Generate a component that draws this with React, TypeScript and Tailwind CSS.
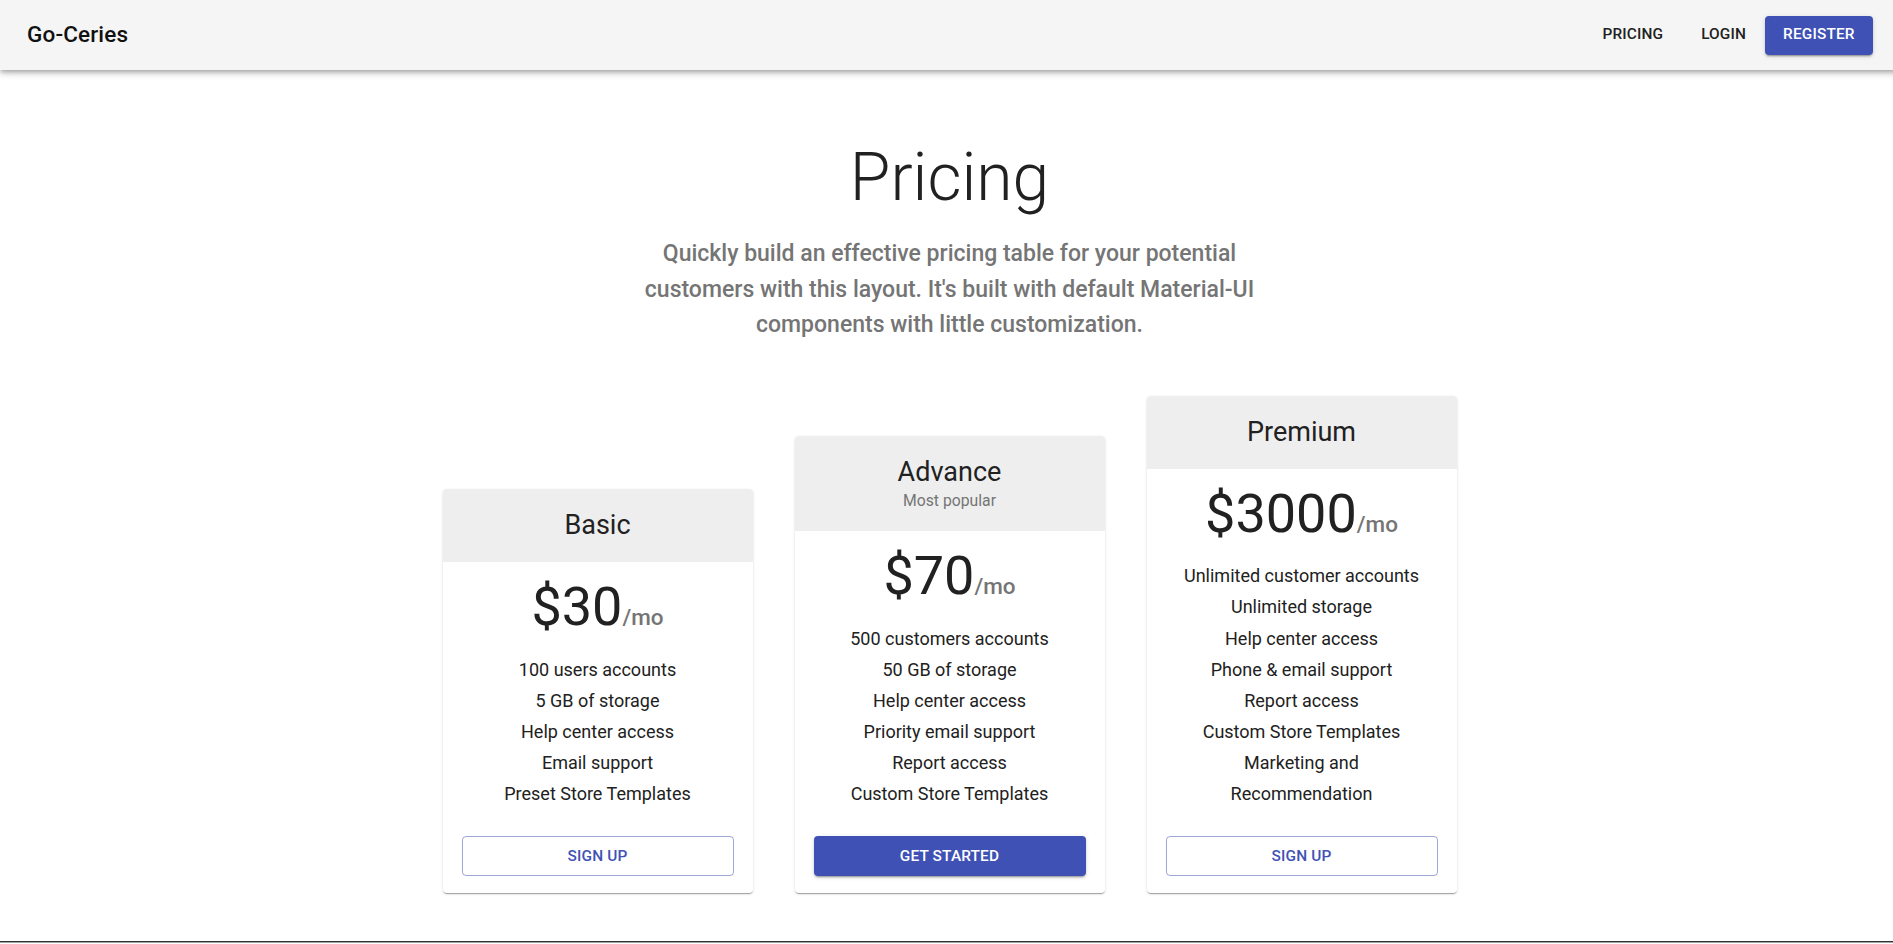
import React from 'react';

interface Tier {
  title: string;
  subheader?: string;
  price: string;
  features: string[];
  buttonText: string;
  contained?: boolean;
}

const tiers: Tier[] = [
  {
    title: 'Basic',
    price: '30',
    features: ['100 users accounts', '5 GB of storage', 'Help center access', 'Email support', 'Preset Store Templates'],
    buttonText: 'Sign up',
  },
  {
    title: 'Advance',
    subheader: 'Most popular',
    price: '70',
    features: [
      '500 customers accounts',
      '50 GB of storage',
      'Help center access',
      'Priority email support',
      'Report access',
      'Custom Store Templates',
    ],
    buttonText: 'Get started',
    contained: true,
  },
  {
    title: 'Premium',
    price: '3000',
    features: [
      'Unlimited customer accounts',
      'Unlimited storage',
      'Help center access',
      'Phone & email support',
      'Report access',
      'Custom Store Templates',
      'Marketing and',
      'Recommendation',
    ],
    buttonText: 'Sign up',
  },
];

const PricingCard = ({ tier }: { tier: Tier }) => {
  return (
    <div className="w-[310px] bg-white rounded-[4px] overflow-hidden shadow-[0px_2px_1px_-1px_rgba(0,0,0,0.2),0px_1px_1px_0px_rgba(0,0,0,0.14),0px_1px_3px_0px_rgba(0,0,0,0.12)]">
      <div className="bg-[#eeeeee] py-[19px] text-center">
        <div className="text-[27px] leading-[35px] text-[#212121]">{tier.title}</div>
        {tier.subheader && (
          <div className="text-[15.75px] leading-[22px] text-[#757575]">{tier.subheader}</div>
        )}
      </div>
      <div className="pt-[14px] px-[18px]">
        <div className="flex justify-center items-baseline mb-[16px]">
          <span className="text-[54px] leading-[61.6px] text-[#212121]">${tier.price}</span>
          <span className="text-[22.5px] leading-[35.2px] text-[#757575] font-medium">/mo</span>
        </div>
        <ul className="text-center">
          {tier.features.map((line) => (
            <li key={line} className="text-[18px] leading-[31.1px] text-[#212121]">
              {line}
            </li>
          ))}
        </ul>
      </div>
      <div className="pt-[27px] px-[19px] pb-[17px]">
        {tier.contained ? (
          <button className="w-full h-[40px] rounded-[4px] bg-[#3f51b5] text-white text-[15.4px] font-medium uppercase tracking-[0.15px] shadow-[0px_3px_1px_-2px_rgba(0,0,0,0.2),0px_2px_2px_0px_rgba(0,0,0,0.14),0px_1px_5px_0px_rgba(0,0,0,0.12)]">
            {tier.buttonText}
          </button>
        ) : (
          <button className="w-full h-[40px] rounded-[4px] border border-[rgba(63,81,181,0.5)] text-[#3f51b5] text-[15.4px] font-medium uppercase tracking-[0.15px]">
            {tier.buttonText}
          </button>
        )}
      </div>
    </div>
  );
};

export default function App() {
  return (
    <div className="w-full h-[944px] overflow-hidden bg-white font-['Roboto',sans-serif]">
      <div className="w-[1899px]">
        <header className="relative z-10 h-[70px] bg-[#f5f5f5] flex items-center justify-between pl-[27px] pr-[26.4px] shadow-[0px_2px_4px_-1px_rgba(0,0,0,0.2),0px_4px_5px_0px_rgba(0,0,0,0.14),0px_1px_10px_0px_rgba(0,0,0,0.12)]">
          <div className="text-[22.5px] font-medium text-[#111111] tracking-[0.15px]">Go-Ceries</div>
          <nav className="flex items-center text-[15.4px] font-medium uppercase tracking-[0.15px] text-[#212121]">
            <a className="mr-[38px]">Pricing</a>
            <a className="mr-[19px]">Login</a>
            <button className="h-[39px] px-[18px] rounded-[4px] bg-[#3f51b5] text-white font-medium uppercase shadow-[0px_3px_1px_-2px_rgba(0,0,0,0.2),0px_2px_2px_0px_rgba(0,0,0,0.14),0px_1px_5px_0px_rgba(0,0,0,0.12)]">
              Register
            </button>
          </nav>
        </header>

        <main>
          <section className="pt-[68px] text-center">
            <h1 className="text-[66px] leading-[79px] font-light text-[#212121] mb-[19px]">Pricing</h1>
            <p className="text-[23px] leading-[35.6px] font-medium text-[#757575]">
              Quickly build an effective pricing table for your potential
              <br />
              customers with this layout. It's built with default Material-UI
              <br />
              components with little customization.
            </p>
          </section>

          <section className="mt-[53px] flex justify-center items-end gap-[42px]">
            {tiers.map((tier) => (
              <PricingCard key={tier.title} tier={tier} />
            ))}
          </section>
        </main>

        <footer className="mt-[48px]">
          <div className="h-px bg-[#2b3535]" />
          <div className="h-px bg-[#a3a3a3]" />
        </footer>
      </div>
    </div>
  );
}
